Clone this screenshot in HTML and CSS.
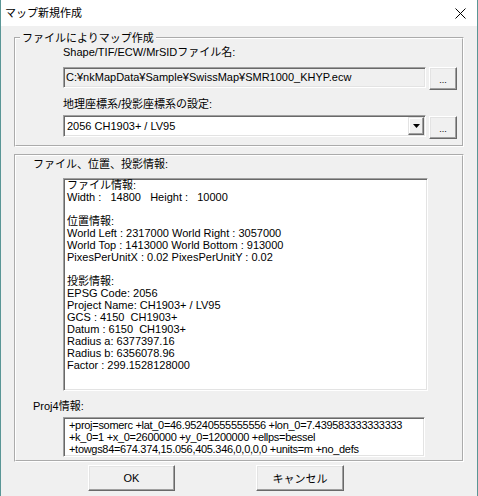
FILE: index.html
```html
<!DOCTYPE html>
<html lang="ja">

<head>
    <meta charset="UTF-8" />
    <title>マップ新規作成</title>
    <link rel="stylesheet" href="styles.css">
</head>

<body>
    <div class="window">
        <div class="titlebar">
            <span class="title">マップ新規作成</span>
            <span class="close">
                <svg width="11" height="11" viewBox="0 0 11 11">
                    <path d="M0.5 0.5 L10.5 10.5 M10.5 0.5 L0.5 10.5" stroke="#000" stroke-width="1" fill="none" />
                </svg>
            </span>
        </div>

        <div class="dialog">
            <fieldset class="group">
                <legend>ファイルによりマップ作成</legend>
                <div class="group-body">
                    <div class="label">Shape/TIF/ECW/MrSIDファイル名:</div>
                    <div class="field-row">
                        <div class="edit readonly">C:¥nkMapData¥Sample¥SwissMap¥SMR1000_KHYP.ecw</div>
                        <button class="btn browse">...</button>
                    </div>

                    <div class="label label-gap">地理座標系/投影座標系の設定:</div>
                    <div class="field-row combo-row">
                        <div class="combo">
                            <span class="combo-text">2056 CH1903+ / LV95</span>
                            <span class="combo-arrow">
                                <svg width="7" height="4" viewBox="0 0 7 4">
                                    <path d="M0 0 H7 L3.5 4 Z" fill="#000" />
                                </svg>
                            </span>
                        </div>
                        <button class="btn browse">...</button>
                    </div>
                </div>
            </fieldset>

            <fieldset class="group info">
                <div class="label">ファイル、位置、投影情報:</div>
                <div class="textbox info-box">ファイル情報:
Width :   14800   Height :   10000

位置情報:
World Left : 2317000 World Right : 3057000
World Top : 1413000 World Bottom : 913000
PixesPerUnitX : 0.02 PixesPerUnitY : 0.02

投影情報:
EPSG Code: 2056
Project Name: CH1903+ / LV95
GCS : 4150  CH1903+
Datum : 6150  CH1903+
Radius a: 6377397.16
Radius b: 6356078.96
Factor : 299.1528128000</div>

                <div class="label proj-label">Proj4情報:</div>
                <div class="textbox proj-box">+proj=somerc +lat_0=46.95240555555556 +lon_0=7.439583333333333
+k_0=1 +x_0=2600000 +y_0=1200000 +ellps=bessel
+towgs84=674.374,15.056,405.346,0,0,0,0 +units=m +no_defs</div>
            </fieldset>

            <div class="buttons">
                <button class="btn push ok">OK</button>
                <button class="btn push cancel">キャンセル</button>
            </div>
        </div>
    </div>
</body>

</html>
```

FILE: styles.css
```css
body {
    margin: 0;
    font-family: "Liberation Sans", "Noto Sans CJK JP", sans-serif;
    font-size: 11px;
    color: #000;
}

.window {
    width: 478px;
    height: 496px;
    box-sizing: border-box;
    border-left: 1px solid #5a9696;
    border-right: 1px solid #5a9696;
    background: #f0f0f0;
    display: flex;
    flex-direction: column;
    overflow: hidden;
}

.titlebar {
    height: 26px;
    flex: none;
    background: #fff;
    display: flex;
    align-items: center;
    padding: 0 11px 0 4px;
}

.title {
    line-height: 14px;
}

.close {
    margin-left: auto;
}

.close svg {
    display: block;
}

.dialog {
    padding: 5px 13px 0 13px;
}

/* group boxes */
.group {
    margin: 0;
    min-width: 0;
    border: 2px groove #fff;
    padding: 0 5px 6px 4px;
}

.group legend {
    padding: 0 2px;
    line-height: 14px;
}

.group-body {
    padding-left: 43px;
}

.label {
    line-height: 14px;
}

.label-gap {
    margin-top: 7px;
}

.field-row {
    display: flex;
    align-items: flex-start;
    gap: 3px;
    margin-top: 8px;
}

.combo-row {
    margin-top: 4px;
}

/* sunken controls */
.edit,
.combo,
.textbox {
    box-sizing: border-box;
    border: 1px solid;
    border-color: #a0a0a0 #fff #fff #a0a0a0;
    box-shadow: inset 1px 1px #696969, inset -1px -1px #e3e3e3;
}

.edit {
    flex: 1;
    height: 21px;
    padding: 0 2px;
    line-height: 19px;
    white-space: nowrap;
    overflow: hidden;
}

.readonly {
    background: #f0f0f0;
}

.combo {
    flex: 1;
    height: 22px;
    padding: 1px;
    display: flex;
    background: #fff;
}

.combo-text {
    flex: 1;
    padding-left: 2px;
    line-height: 18px;
}

.combo-arrow {
    width: 16px;
    box-sizing: border-box;
    display: flex;
    align-items: center;
    justify-content: center;
    background: #f0f0f0;
    border: 1px solid;
    border-color: #e3e3e3 #696969 #696969 #e3e3e3;
    box-shadow: inset -1px -1px #a0a0a0, inset 1px 1px #fff;
}

/* raised buttons */
.btn {
    font-family: inherit;
    color: #000;
    background: #f0f0f0;
    border: 1px solid;
    border-color: #fff #696969 #696969 #fff;
    box-shadow: inset -1px -1px #a0a0a0, inset 1px 1px #e3e3e3;
    padding: 0;
    box-sizing: border-box;
}

.browse {
    width: 28px;
    height: 23px;
    font-size: 9px;
    line-height: 9px;
    padding-top: 3px;
}

.combo-row .browse {
    margin-top: 1px;
}

.info {
    margin-top: 7px;
    padding: 1px 0 3px 17px;
}

.textbox {
    margin-left: 30px;
    background: #fff;
    line-height: 12px;
    white-space: pre;
    overflow: hidden;
}

.info-box {
    width: 365px;
    height: 213px;
    margin-top: 7px;
    padding: 0 3px;
}

.proj-label {
    margin-top: 8px;
}

.proj-box {
    width: 362px;
    height: 40px;
    margin-top: 4px;
    padding: 1px 5px 0;
    letter-spacing: -0.3px;
}

.buttons {
    display: flex;
    gap: 81px;
    padding-left: 74px;
    margin-top: 3px;
}

.push {
    height: 26px;
    font-size: 11px;
}

.ok {
    width: 87px;
}

.cancel {
    width: 88px;
}
```
